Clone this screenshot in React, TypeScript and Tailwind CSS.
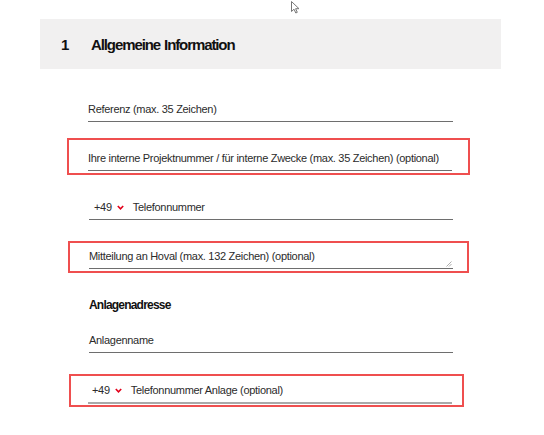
import { ReactNode } from 'react';

function Chevron() {
  return (
    <svg width="7" height="5" viewBox="0 0 7 5" className="shrink-0">
      <polyline points="0.8,1 3.5,3.8 6.2,1" fill="none" stroke="#e2001a" strokeWidth="1.6" />
    </svg>
  );
}

function Field({ children, className = '' }: { children: ReactNode; className?: string }) {
  return (
    <div className={`h-[24px] flex items-end pb-[5px] border-b border-[#6e6e6e] ${className}`}>
      {children}
    </div>
  );
}

function Label({ children }: { children: ReactNode }) {
  return <span className="text-[11px] leading-[14px] tracking-[-0.3px] text-[#2b2b2b] whitespace-nowrap">{children}</span>;
}

export default function App() {
  return (
    <div className="relative w-[544px] h-[435px] bg-white overflow-hidden font-['Liberation_Sans',Arial,sans-serif] pt-[19px]">
      {/* mouse pointer */}
      <svg className="absolute left-[291px] top-[1px]" width="9" height="13" viewBox="0 0 9 13">
        <path d="M0.5 0.5 L0.5 10.5 L3 8.2 L4.8 12 L6.3 11.3 L4.6 7.7 L8 7.7 Z" fill="#fff" stroke="#777" strokeWidth="1" strokeLinejoin="round" />
      </svg>

      {/* Section header */}
      <div className="ml-[40px] w-[461px] h-[50px] bg-[#f1f0f0] flex items-center pl-[21px] pt-[2px]">
        <span className="w-[30px] text-[15px] font-bold text-[#111]">1</span>
        <span className="text-[15px] font-bold text-[#111] tracking-[-1.1px] [word-spacing:1px]">Allgemeine Information</span>
      </div>

      {/* Referenz */}
      <div className="mt-[29px] ml-[88px] w-[365px]">
        <Field>
          <Label>Referenz (max. 35 Zeichen)</Label>
        </Field>
      </div>

      {/* Projektnummer - highlighted */}
      <div className="mt-[16px] ml-[67px] w-[403px] border-2 border-[#ef4f4f] pl-[19px] pt-[7px] pb-[2px]">
        <div className="w-[364px]">
          <Field>
            <Label>Ihre interne Projektnummer / für interne Zwecke (max. 35 Zeichen) (optional)</Label>
          </Field>
        </div>
      </div>

      {/* Telefonnummer */}
      <div className="mt-[21px] ml-[89px] w-[364px]">
        <Field>
          <div className="flex items-center pl-[5px]">
            <Label>+49</Label>
            <span className="ml-[5px] mr-[9px] flex items-center">
              <Chevron />
            </span>
            <Label>Telefonnummer</Label>
          </div>
        </Field>
      </div>

      {/* Mitteilung - highlighted */}
      <div className="mt-[21px] ml-[68px] w-[401px] border-2 border-[#ef4f4f] pl-[19px] pt-[2px] pb-[2px]">
        <div className="relative w-[364px]">
          <Field className="pb-[3px]">
            <Label>Mitteilung an Hoval (max. 132 Zeichen) (optional)</Label>
          </Field>
          <svg className="absolute right-[1px] bottom-[2px]" width="6" height="6" viewBox="0 0 6 6">
            <line x1="0.5" y1="5.5" x2="5.5" y2="0.5" stroke="#999" strokeWidth="0.8" />
            <line x1="3" y1="5.5" x2="5.5" y2="3" stroke="#999" strokeWidth="0.8" />
          </svg>
        </div>
      </div>

      {/* Anlagenadresse */}
      <div className="mt-[25px] ml-[89px] text-[12px] leading-[14px] font-bold text-[#111] tracking-[-0.8px]">
        Anlagenadresse
      </div>

      {/* Anlagenname */}
      <div className="mt-[17px] ml-[89px] w-[364px]">
        <Field>
          <Label>Anlagenname</Label>
        </Field>
      </div>

      {/* Telefonnummer Anlage - highlighted */}
      <div className="mt-[21px] ml-[69px] w-[395px] border-2 border-[#ef4f4f] pl-[17px] pt-[4px] pb-[1px]">
        <div className="w-[364px]">
          <div className="h-[24px] flex items-end pb-[5px] border-b-2 border-[#a9a9a9]">
            <div className="flex items-center pl-[4px]">
              <Label>+49</Label>
              <span className="ml-[5px] mr-[9px] flex items-center">
                <Chevron />
              </span>
              <Label>Telefonnummer Anlage (optional)</Label>
            </div>
          </div>
        </div>
      </div>
    </div>
  );
}
